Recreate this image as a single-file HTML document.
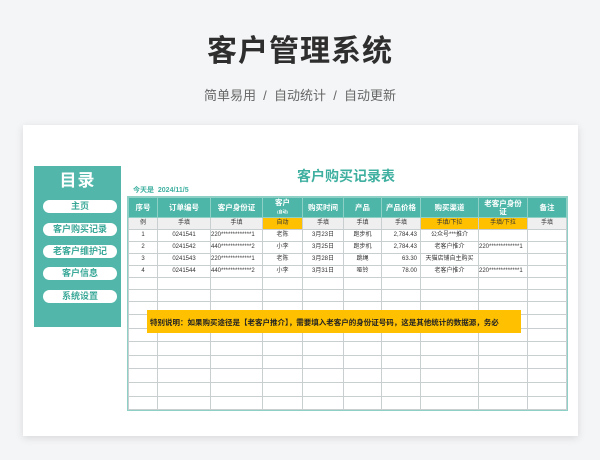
<!DOCTYPE html>
<html><head><meta charset="utf-8"><style>
*{margin:0;padding:0;box-sizing:border-box}
body{width:600px;height:460px;background:#f4f5f7;font-family:"Liberation Sans","Noto Sans CJK SC",sans-serif;position:relative;overflow:hidden}
.t{position:absolute;left:0;width:600px;text-align:center}
#h1{top:26px;font-size:30px;font-weight:bold;color:#2e2e2e;letter-spacing:1px}
#h2{top:85px;font-size:13px;color:#666}
#card{position:absolute;left:23px;top:125px;width:555px;height:311px;background:#fff;box-shadow:0 2px 8px rgba(0,0,0,.12)}
#side{position:absolute;left:34px;top:166px;width:87px;height:161px;background:#52b7aa}
#side .tt{color:#fff;font-size:17px;font-weight:bold;text-align:center;margin-top:4px;letter-spacing:1px;line-height:22px}
.pill{position:absolute;left:9px;width:74px;height:13px;background:#fff;border-radius:7px;color:#3aa898;font-size:9px;font-weight:bold;text-align:center;line-height:13px}
#ttl{position:absolute;left:297px;top:166px;font-size:14px;font-weight:bold;color:#3fb0a0}
#today{position:absolute;left:133px;top:185px;font-size:7px;font-weight:bold;color:#3fb0a0}
table{position:absolute;left:128px;top:197px;border-collapse:collapse;width:438px;table-layout:fixed;font-size:6px;color:#333}
td{border:1px solid #c9ced0;text-align:center;padding:0;overflow:hidden;white-space:nowrap;line-height:8px}
tr.hd td{background:#4db6a8;color:#fff;font-weight:bold;font-size:7.5px;height:20px;border-color:#8fd0c6;line-height:8px}
tr.ex td{background:#efefef;height:11.5px}
td.y{background:#ffc000 !important}
tr.r td{height:12px}
tr.s td{height:13.6px}
td.l{text-align:left}td.rt{text-align:right;padding-right:3px}
table{outline:1px solid #8fd0c6}
#note{position:absolute;left:147px;top:310px;width:374px;height:23px;background:#ffc000;font-size:7.5px;font-weight:bold;color:#222;line-height:25px;padding-left:3px;white-space:nowrap;overflow:hidden}
</style></head><body>
<div class="t" id="h1">客户管理系统</div>
<div class="t" id="h2">简单易用 &nbsp;/&nbsp; 自动统计 &nbsp;/&nbsp; 自动更新</div>
<div id="card"></div>
<div id="side"><div class="tt">目录</div>
<div class="pill" style="top:34px">主页</div>
<div class="pill" style="top:57px">客户购买记录</div>
<div class="pill" style="top:79px">老客户维护记</div>
<div class="pill" style="top:101px">客户信息</div>
<div class="pill" style="top:124px">系统设置</div>
</div>
<div id="ttl">客户购买记录表</div>
<div id="today">今天是 &nbsp;2024/11/5</div>
<table>
<colgroup><col style="width:29px"><col style="width:53px"><col style="width:52px"><col style="width:40px"><col style="width:41px"><col style="width:38px"><col style="width:39px"><col style="width:58px"><col style="width:49px"><col style="width:39px"></colgroup>
<tr class="hd"><td>序号</td><td>订单编号</td><td>客户身份证</td><td>客户<br><span style="font-size:4px">(自动)</span></td><td>购买时间</td><td>产品</td><td>产品价格</td><td>购买渠道</td><td>老客户身份<br>证</td><td>备注</td></tr>
<tr class="ex"><td>例</td><td>手填</td><td>手填</td><td class="y">自动</td><td>手填</td><td>手填</td><td>手填</td><td class="y">手填/下拉</td><td class="y">手填/下拉</td><td>手填</td></tr>
<tr class="r"><td>1</td><td>0241541</td><td class="l">220*************1</td><td>老陈</td><td>3月23日</td><td>跑步机</td><td class="rt">2,784.43</td><td>公众号***推介</td><td></td><td></td></tr>
<tr class="r"><td>2</td><td>0241542</td><td class="l">440*************2</td><td>小李</td><td>3月25日</td><td>跑步机</td><td class="rt">2,784.43</td><td>老客户推介</td><td class="l">220*************1</td><td></td></tr>
<tr class="r"><td>3</td><td>0241543</td><td class="l">220*************1</td><td>老陈</td><td>3月28日</td><td>跳绳</td><td class="rt">63.30</td><td>天猫店铺自主购买</td><td></td><td></td></tr>
<tr class="r"><td>4</td><td>0241544</td><td class="l">440*************2</td><td>小李</td><td>3月31日</td><td>哑铃</td><td class="rt">78.00</td><td>老客户推介</td><td class="l">220*************1</td><td></td></tr>
<tr class="r"><td></td><td></td><td></td><td></td><td></td><td></td><td></td><td></td><td></td><td></td></tr>
<tr class="r"><td></td><td></td><td></td><td></td><td></td><td></td><td></td><td></td><td></td><td></td></tr>
<tr class="s"><td></td><td></td><td></td><td></td><td></td><td></td><td></td><td></td><td></td><td></td></tr>
<tr class="s"><td></td><td></td><td></td><td></td><td></td><td></td><td></td><td></td><td></td><td></td></tr>
<tr class="s"><td></td><td></td><td></td><td></td><td></td><td></td><td></td><td></td><td></td><td></td></tr>
<tr class="s"><td></td><td></td><td></td><td></td><td></td><td></td><td></td><td></td><td></td><td></td></tr>
<tr class="s"><td></td><td></td><td></td><td></td><td></td><td></td><td></td><td></td><td></td><td></td></tr>
<tr class="s"><td></td><td></td><td></td><td></td><td></td><td></td><td></td><td></td><td></td><td></td></tr>
<tr class="s"><td></td><td></td><td></td><td></td><td></td><td></td><td></td><td></td><td></td><td></td></tr>
<tr class="s"><td></td><td></td><td></td><td></td><td></td><td></td><td></td><td></td><td></td><td></td></tr>
</table>
<div id="note">特别说明：如果购买途径是【老客户推介】，需要填入老客户的身份证号码，这是其他统计的数据源，务必</div>
</body></html>
